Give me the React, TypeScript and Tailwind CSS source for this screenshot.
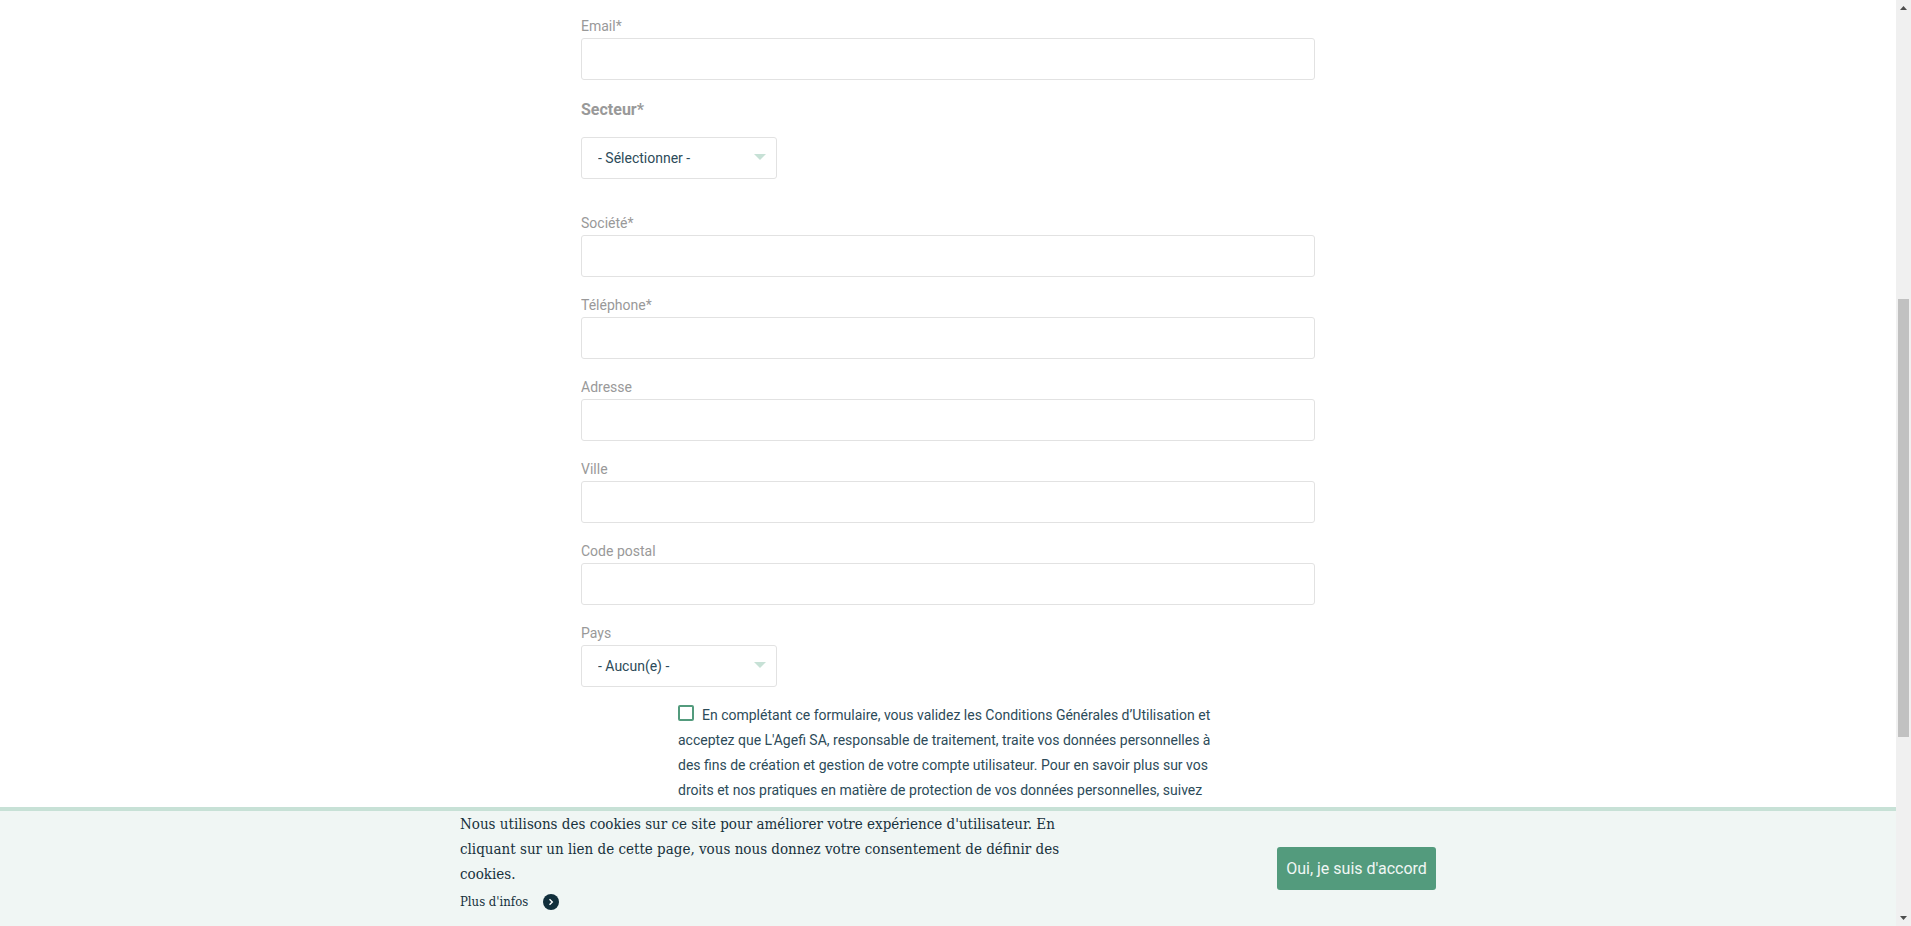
import { useId } from 'react';

type FieldProps = { label: string; type?: string };

function Field({ label, type = 'text' }: FieldProps) {
  const id = useId();
  return (
    <div className="mb-[15px]">
      <label htmlFor={id} className="block pt-0.5 text-sm/[23px] text-[#999]">
        {label}
      </label>
      <input
        id={id}
        type={type}
        className="block h-[42px] w-full rounded-[3px] border border-[#e2e2e2] bg-white px-4 text-sm text-[#2d4b59] outline-none"
      />
    </div>
  );
}

function Dropdown({ id, option }: { id: string; option: string }) {
  return (
    <div className="grid w-[196px] items-center">
      <select
        id={id}
        className="col-start-1 row-start-1 h-[42px] w-full appearance-none rounded-[3px] border border-[#e2e2e2] bg-white px-4 text-sm text-[#2d4b59] outline-none"
      >
        <option>{option}</option>
      </select>
      <svg
        viewBox="0 0 12 6"
        className="pointer-events-none col-start-1 row-start-1 mr-[11px] mb-0.5 h-1.5 w-3 justify-self-end fill-[#c7e1d6]"
        aria-hidden="true"
      >
        <path d="M0 0h12L6 6z" />
      </svg>
    </div>
  );
}

function Scrollbar() {
  return (
    <div className="flex w-[15px] shrink-0 flex-col items-center bg-[#f0f0f0]" aria-hidden="true">
      <svg viewBox="0 0 15 15" className="h-[15px] w-[15px] fill-[#4d4d4d]">
        <path d="M4 10h7L7.500 6z" />
      </svg>
      <div className="flex w-full flex-1 flex-col items-center">
        <div className="grow-[284]" />
        <div className="w-[11px] grow-[438] bg-[#c1c1c1]" />
        <div className="grow-[174]" />
      </div>
      <svg viewBox="0 0 15 15" className="h-[15px] w-[15px] fill-[#4d4d4d]">
        <path d="M4 5h7L7.500 9z" />
      </svg>
    </div>
  );
}

function CookieBanner() {
  return (
    <section className="shrink-0 border-t-4 border-[#c7e1d6] bg-[#f0f6f4] pb-3 text-[#17313c]">
      <div className="mx-auto flex max-w-[976px] items-start justify-between">
        <div className="pt-px font-['DejaVu_Serif_Condensed','DejaVu_Serif',serif]">
          <p className="text-[15px]/[25px]">
            Nous utilisons des cookies sur ce site pour améliorer votre expérience d'utilisateur. En
            <br />
            cliquant sur un lien de cette page, vous nous donnez votre consentement de définir des
            <br />
            cookies.
          </p>
          <button type="button" className="mt-[3px] flex items-center gap-[15px] text-[13px]/6">
            Plus d'infos
            <svg viewBox="0 0 16 16" className="h-4 w-4" aria-hidden="true">
              <circle cx="8" cy="8" r="8" fill="#112f3b" />
              <path d="M6.500 5.200 9.300 8l-2.800 2.800" fill="none" stroke="#fff" strokeWidth="1.400" />
            </svg>
          </button>
        </div>
        <button
          type="button"
          className="mt-9 h-[43px] w-[159px] rounded-[3px] bg-[#539b7d] text-center text-base text-[#f0f6f4]"
        >
          Oui, je suis d'accord
        </button>
      </div>
    </section>
  );
}

export default function App() {
  return (
    <div className="flex h-screen bg-white font-[Roboto,sans-serif]">
      <main className="flex min-w-0 flex-1 flex-col">
        <form className="mx-auto min-h-0 w-full max-w-[734px] flex-1 overflow-hidden pt-[13px]">
          <Field label="Email*" type="email" />
          <div className="mb-[31px] pt-0.5">
            <label htmlFor="secteur" className="mb-[15px] block text-base/[25px] font-bold text-[#999]">
              Secteur*
            </label>
            <Dropdown id="secteur" option="- Sélectionner -" />
          </div>
          <Field label="Société*" />
          <Field label="Téléphone*" type="tel" />
          <Field label="Adresse" />
          <Field label="Ville" />
          <Field label="Code postal" />
          <label htmlFor="pays" className="block pt-0.5 text-sm/[23px] text-[#999]">
            Pays
          </label>
          <Dropdown id="pays" option="- Aucun(e) -" />
          <div className="mt-4 px-[97px] text-sm/[25px] whitespace-nowrap text-[#2d4b59]">
            <input
              id="conditions"
              type="checkbox"
              className="mr-2 inline-block h-4 w-4 appearance-none rounded-xs border-2 border-[#539b7d] bg-white align-[-1px]"
            />
            <label htmlFor="conditions">
              En complétant ce formulaire, vous validez les Conditions Générales d’Utilisation et
              <br />
              acceptez que L'Agefi SA, responsable de traitement, traite vos données personnelles à
              <br />
              des fins de création et gestion de votre compte utilisateur. Pour en savoir plus sur vos
              <br />
              droits et nos pratiques en matière de protection de vos données personnelles, suivez
            </label>
          </div>
        </form>
        <CookieBanner />
      </main>
      <Scrollbar />
    </div>
  );
}
